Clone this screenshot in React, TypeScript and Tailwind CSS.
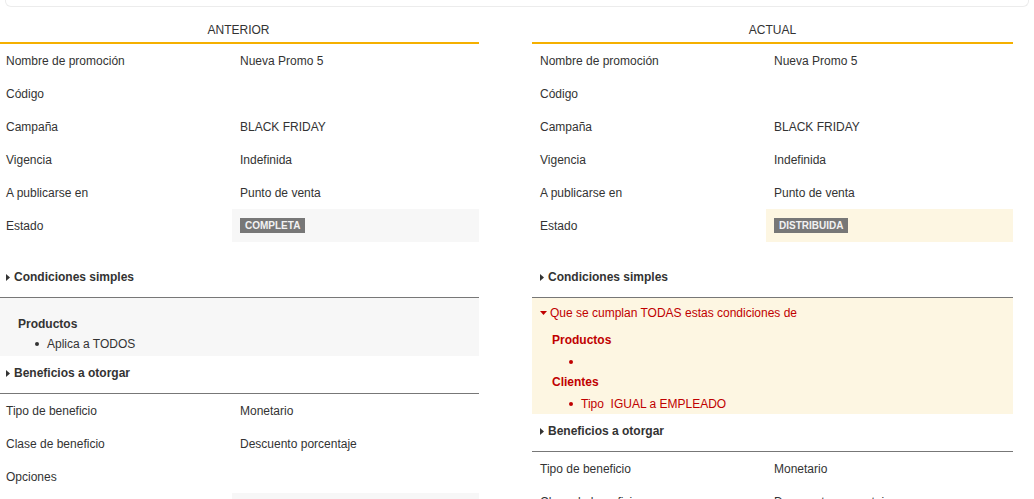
import React from 'react'

type Row = { label: string; value?: React.ReactNode; tint?: 'gray' | 'cream' }

const FONT = { fontFamily: '"Liberation Sans", Arial, sans-serif' }

function Badge({ text }: { text: string }) {
  return (
    <span className="inline-block bg-[#777] px-[5px] text-[10px] font-bold leading-[15px] text-[#f2f2f2]">
      {text}
    </span>
  )
}

function Filas({ filas }: { filas: Row[] }) {
  return (
    <div>
      {filas.map((f, i) => (
        <div key={i} className="flex h-[33px] items-stretch">
          <div className="flex w-[234px] shrink-0 items-center pl-[8px]">{f.label}</div>
          <div
            className={
              'flex flex-1 items-center pl-[8px] ' +
              (f.tint === 'gray' ? 'bg-[#f7f7f7]' : f.tint === 'cream' ? 'bg-[#fdf6e2]' : '')
            }
          >
            {f.value}
          </div>
        </div>
      ))}
    </div>
  )
}

function Seccion({ titulo, className = '' }: { titulo: string; className?: string }) {
  return (
    <div className={'flex items-center border-b border-[#777] pb-[13px] pt-[10px] pl-[8px] ' + className}>
      <svg width="4" height="7" viewBox="0 0 4 7" className="mr-[4px]">
        <path d="M0 0 L4 3.5 L0 7 Z" fill="#333" />
      </svg>
      <span className="font-bold leading-[14px]">{titulo}</span>
    </div>
  )
}

function Vineta({ children }: { children?: React.ReactNode }) {
  return (
    <div className="flex h-[14px] items-center pl-[37px] leading-[14px]">
      <span className="mr-[8px] h-[4px] w-[4px] rounded-full bg-current" />
      <span>{children}</span>
    </div>
  )
}

function Columna({
  titulo,
  estado,
  tint,
  condiciones,
  beneficios,
}: {
  titulo: string
  estado: string
  tint: 'gray' | 'cream'
  condiciones: React.ReactNode
  beneficios: Row[]
}) {
  const generales: Row[] = [
    { label: 'Nombre de promoción', value: 'Nueva Promo 5' },
    { label: 'Código' },
    { label: 'Campaña', value: 'BLACK FRIDAY' },
    { label: 'Vigencia', value: 'Indefinida' },
    { label: 'A publicarse en', value: 'Punto de venta' },
    { label: 'Estado', value: <Badge text={estado} />, tint },
  ]
  return (
    <div>
      <div className="border-b-2 border-[#f5b000] pt-[16px] pb-[5px] text-center leading-[14px]">{titulo}</div>
      <Filas filas={generales} />
      <Seccion titulo="Condiciones simples" className="mt-[18px]" />
      {condiciones}
      <Seccion titulo="Beneficios a otorgar" />
      <Filas filas={beneficios} />
    </div>
  )
}

export default function App() {
  const beneficios: Row[] = [
    { label: 'Tipo de beneficio', value: 'Monetario' },
    { label: 'Clase de beneficio', value: 'Descuento porcentaje' },
    { label: 'Opciones' },
    { label: '', tint: 'gray' },
  ]

  return (
    <div className="h-[499px] overflow-hidden bg-white text-[12px] text-[#333]" style={FONT}>
      <div className="ml-[5px] h-[7px] w-[1024px] rounded-b-[6px] border border-t-0 border-[#ececec]" />
      <div className="-ml-[2px] grid w-[1015px] grid-cols-[481px_481px] gap-x-[53px]">
        <Columna
          titulo="ANTERIOR"
          estado="COMPLETA"
          tint="gray"
          beneficios={beneficios}
          condiciones={
            <div className="bg-[#f7f7f7] pt-[19px] pb-[5px]">
              <div className="pl-[20px] font-bold leading-[14px]">Productos</div>
              <div className="mt-[6px]">
                <Vineta>Aplica a TODOS</Vineta>
              </div>
            </div>
          }
        />
        <Columna
          titulo="ACTUAL"
          estado="DISTRIBUIDA"
          tint="cream"
          beneficios={beneficios}
          condiciones={
            <div className="bg-[#fdf6e2] pt-[8px] pb-[3px] text-[#c00000]">
              <div className="flex items-center pl-[8px] leading-[14px]">
                <svg width="7" height="4" viewBox="0 0 7 4" className="mr-[3px]">
                  <path d="M0 0 L7 0 L3.5 4 Z" fill="#c00000" />
                </svg>
                Que se cumplan TODAS estas condiciones de
              </div>
              <div className="mt-[13px] pl-[20px] font-bold leading-[14px]">Productos</div>
              <div className="mt-[8px]">
                <Vineta />
              </div>
              <div className="mt-[6px] pl-[20px] font-bold leading-[14px]">Clientes</div>
              <div className="mt-[8px]">
                <Vineta>
                  Tipo&nbsp;&nbsp;IGUAL a EMPLEADO
                </Vineta>
              </div>
            </div>
          }
        />
      </div>
    </div>
  )
}
